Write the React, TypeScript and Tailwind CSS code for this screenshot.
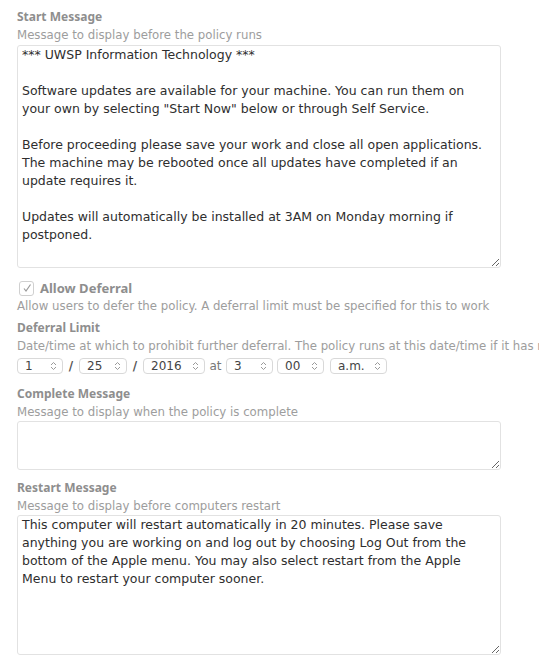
import type { ReactNode } from "react";

const font = { fontFamily: '"Lucida Grande", "DejaVu Sans", "Noto Sans", sans-serif' };
const labelFont = { fontFamily: '"Lucida Grande", "Noto Sans", "DejaVu Sans", sans-serif' };

const startMessage = `*** UWSP Information Technology ***

Software updates are available for your machine. You can run them on your own by selecting "Start Now" below or through Self Service.

Before proceeding please save your work and close all open applications. The machine may be rebooted once all updates have completed if an update requires it.

Updates will automatically be installed at 3AM on Monday morning if postponed.`;

const restartMessage =
  "This computer will restart automatically in 20 minutes. Please save anything you are working on and log out by choosing Log Out from the bottom of the Apple menu. You may also select restart from the Apple Menu to restart your computer sooner.";

function Label({ children, className = "" }: { children: ReactNode; className?: string }) {
  return (
    <div style={labelFont} className={`text-[12px] font-bold leading-[18px] text-[#8e8e8e] ${className}`}>
      {children}
    </div>
  );
}

function Hint({ children }: { children: ReactNode }) {
  return <div className="text-[11.75px] leading-[18px] text-[#9d9d9d]">{children}</div>;
}

function Area({ value, height }: { value: string; height: string }) {
  return (
    <textarea
      readOnly
      defaultValue={value}
      style={font}
      className={`block w-[484px] ${height} resize-y rounded-[3px] border border-[#e2e2e2] bg-white px-[4px] py-0 text-[12.5px] leading-[18px] text-[#2e2e2e] outline-none`}
    />
  );
}

function Chevrons() {
  return (
    <svg width="7" height="10" viewBox="0 0 7 10" fill="none" stroke="#9a9a9a" strokeWidth="1">
      <path d="M1 4 L3.5 1.5 L6 4" />
      <path d="M1 6 L3.5 8.5 L6 6" />
    </svg>
  );
}

function Select({ value, width }: { value: string; width: string }) {
  return (
    <div
      className={`flex h-[16px] ${width} items-center justify-between rounded-[4px] border border-[#d9d9d9] bg-white pl-[7px] pr-[5px] text-[12px] leading-none text-[#444]`}
    >
      <span>{value}</span>
      <Chevrons />
    </div>
  );
}

export default function App() {
  return (
    <div style={font} className="min-h-[665px] w-[539px] overflow-hidden whitespace-nowrap bg-white pl-[17px] pt-[8px]">
      <Label>Start Message</Label>
      <Hint>Message to display before the policy runs</Hint>
      <div className="mt-[1px]">
        <Area value={startMessage} height="h-[223px]" />
      </div>

      <div className="mt-[11px] flex items-center gap-[6px] pl-[2px]">
        <span className="flex h-[15px] w-[15px] items-center justify-center rounded-[3px] border border-[#d0d0d0] bg-white">
          <svg width="10" height="10" viewBox="0 0 10 10" fill="none" stroke="#9a9a9a" strokeWidth="1.2">
            <path d="M2 5.5 L4 8 L8.5 1.5" />
          </svg>
        </span>
        <span style={labelFont} className="text-[13px] font-bold leading-[18px] text-[#8e8e8e]">
          Allow Deferral
        </span>
      </div>
      <Hint>Allow users to defer the policy. A deferral limit must be specified for this to work</Hint>

      <Label className="mt-[4px]">Deferral Limit</Label>
      <Hint>Date/time at which to prohibit further deferral. The policy runs at this date/time if it has not been run</Hint>
      <div className="mt-[2px] flex items-center text-[12px] text-[#444]">
        <Select value="1" width="w-[46px]" />
        <span className="w-[16px] text-center font-bold text-[#555]">/</span>
        <Select value="25" width="w-[48px]" />
        <span className="w-[16px] text-center font-bold text-[#555]">/</span>
        <Select value="2016" width="w-[62px]" />
        <span className="w-[21px] text-center text-[#777]">at</span>
        <Select value="3" width="w-[47px]" />
        <span className="w-[4px]" />
        <Select value="00" width="w-[47px]" />
        <span className="w-[6px]" />
        <Select value="a.m." width="w-[57px]" />
      </div>

      <Label className="mt-[10px]">Complete Message</Label>
      <Hint>Message to display when the policy is complete</Hint>
      <Area value="" height="h-[49px]" />

      <Label className="mt-[9px]">Restart Message</Label>
      <Hint>Message to display before computers restart</Hint>
      <Area value={restartMessage} height="h-[140px]" />
    </div>
  );
}
